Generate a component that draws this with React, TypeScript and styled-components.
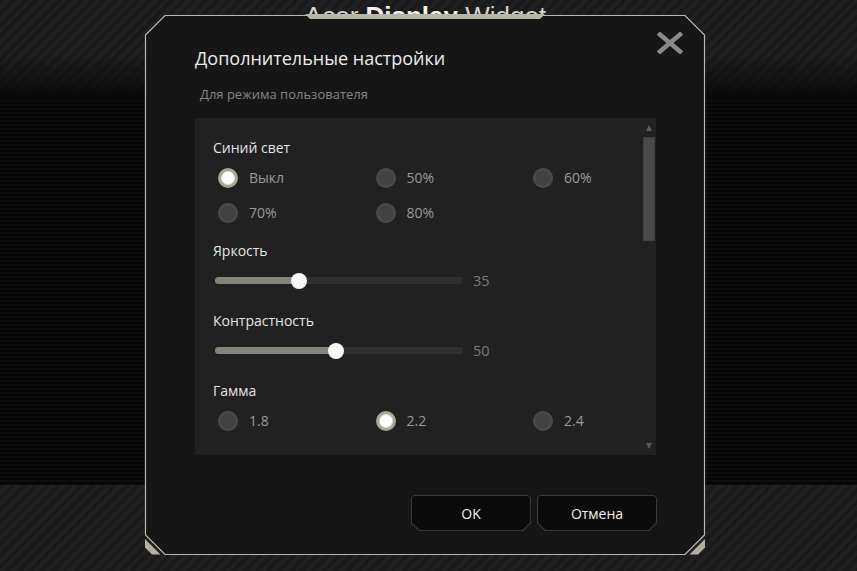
import React from "react";
import styled, { createGlobalStyle } from "styled-components";

const GlobalStyle = createGlobalStyle`
  html, body { margin: 0; padding: 0; background: #0a0a0a; }
  body {
    width: 857px; height: 571px; overflow: hidden;
    font-family: "Open Sans", "Liberation Sans", sans-serif;
  }
  * { box-sizing: border-box; }
`;

const stripes = `repeating-linear-gradient(135deg, #1a1a1a 0 4px, #202020 4px 8px)`;

const Page = styled.div`
  position: relative;
  width: 857px;
  height: 571px;
  overflow: hidden;
  display: flex;
  flex-direction: column;
`;

const TopBar = styled.header`
  height: 100px;
  padding-top: 3px;
  background: linear-gradient(to bottom, rgba(8, 8, 8, 0) 55%, #080808 100%), ${stripes};
`;

const AppTitle = styled.h1`
  margin: 0;
  padding-right: 6px;
  text-align: center;
  font-family: "Liberation Sans", Arial, sans-serif;
  font-weight: 400;
  font-size: 26px;
  line-height: 26px;
  color: #d4d4d4;
  b { font-weight: 700; color: #f2f2f2; }
`;

const Middle = styled.div`
  height: 385px;
  background: repeating-linear-gradient(to bottom, #0d0d0d 0 2px, #070707 2px 4px);
`;

const BottomBar = styled.div`
  flex: 1;
  background: ${stripes};
`;

/* ---------- dialog ---------- */

const Dialog = styled.section`
  position: absolute;
  left: 145px;
  top: 15px;
  width: 560px;
  height: 540px;
  padding: 0 49px 0 50px;
  display: flex;
  flex-direction: column;
`;

const Frame = styled.svg`
  position: absolute;
  left: 0;
  top: 0;
  overflow: visible;
  z-index: 0;
`;

const DialogHeader = styled.div`
  position: relative;
  z-index: 1;
  height: 70px;
  padding-top: 17px;
  display: flex;
  justify-content: space-between;
  align-items: flex-start;
`;

const DialogTitle = styled.h2`
  margin: 14px 0 0 0;
  font-size: 18px;
  line-height: 24px;
  font-weight: 400;
  color: #ececec;
`;

const CloseButton = styled.button`
  width: 26px;
  height: 22px;
  margin-right: -27px;
  padding: 0;
  border: 0;
  background: transparent;
  display: flex;
  align-items: center;
  justify-content: center;
`;

const Subtitle = styled.div`
  position: relative;
  z-index: 1;
  padding-left: 5px;
  font-size: 13px;
  line-height: 18px;
  color: #858585;
`;

const Panel = styled.div`
  position: relative;
  z-index: 1;
  margin-top: 15px;
  height: 337px;
  background: #212121;
  display: flex;
`;

const PanelBody = styled.div`
  flex: 1;
  padding: 20px 0 0 18px;
  overflow: hidden;
  display: flex;
  flex-direction: column;
  gap: 11px;
`;

const Section = styled.div`
  display: flex;
  flex-direction: column;
`;

const SectionLabel = styled.div`
  font-size: 14px;
  line-height: 20px;
  color: #e4e4e4;
`;

const RadioGrid = styled.div`
  margin-top: 2px;
  padding-left: 5px;
  display: grid;
  grid-template-columns: repeat(3, 157.5px);
  grid-auto-rows: 35px;
`;

const RadioOption = styled.label`
  display: flex;
  align-items: center;
  gap: 11px;
  font-size: 14px;
  color: #9a9a9a;
`;

const RadioDot = styled.span<{ $checked?: boolean }>`
  width: 20px;
  height: 20px;
  flex: none;
  border-radius: 50%;
  ${(p) =>
    p.$checked
      ? `background: #ffffff; border: 3.5px solid #a8a592; box-shadow: inset 0 0 0 1px #dcdad0;`
      : `background: radial-gradient(circle, #424242 0 45%, #4e4e4e 72%);`}
`;

const SliderRow = styled.div`
  height: 39px;
  padding-left: 2px;
  display: flex;
  align-items: center;
`;

const Track = styled.div`
  position: relative;
  width: 248px;
  height: 7px;
  border-radius: 4px;
  background: #2f2f2f;
`;

const TrackFill = styled.div`
  height: 100%;
  border-radius: 4px;
  background: #86847a;
`;

const Thumb = styled.div`
  position: absolute;
  top: 50%;
  width: 16px;
  height: 16px;
  margin: -8px 0 0 -8px;
  border-radius: 50%;
  background: #f7f7f7;
`;

const SliderValue = styled.span`
  margin-left: 10px;
  font-size: 14.5px;
  color: #7c7c7c;
`;

const ScrollTrack = styled.div`
  width: 12px;
  margin-right: 1px;
  display: flex;
  flex-direction: column;
`;

const ScrollArrow = styled.div<{ $dir: "up" | "down" }>`
  height: 19px;
  display: flex;
  align-items: center;
  justify-content: center;
  &::before {
    content: "";
    border-left: 3.5px solid transparent;
    border-right: 3.5px solid transparent;
    ${(p) => (p.$dir === "up" ? "border-bottom: 6px solid #5a5a5a;" : "border-top: 6px solid #5a5a5a;")}
  }
`;

const ScrollThumb = styled.div`
  height: 104px;
  background: #4a4a4a;
  box-shadow: inset 0 0 0 1px #404040;
`;

const ScrollSpacer = styled.div`
  flex: 1;
`;

const Footer = styled.div`
  position: relative;
  z-index: 1;
  margin-top: 40px;
  margin-right: -1px;
  display: flex;
  justify-content: flex-end;
  gap: 6px;
`;

const ButtonFrame = styled.div`
  width: 120px;
  height: 36px;
  padding: 1px;
  background: #3a3a3a;
  clip-path: polygon(3px 0, calc(100% - 3px) 0, 100% 3px, 100% calc(100% - 8px), calc(100% - 8px) 100%, 8px 100%, 0 calc(100% - 8px), 0 3px);
`;

const ButtonFace = styled.button`
  width: 100%;
  height: 100%;
  border: 0;
  padding: 0;
  background: #0b0b0b;
  color: #f0f0f0;
  font-family: inherit;
  font-size: 14px;
  clip-path: polygon(2px 0, calc(100% - 2px) 0, 100% 2px, 100% calc(100% - 7.5px), calc(100% - 7.5px) 100%, 7.5px 100%, 0 calc(100% - 7.5px), 0 2px);
`;

type Opt = { label: string; checked?: boolean };

const RadioSet = ({ options }: { options: Opt[] }) => (
  <RadioGrid>
    {options.map((o) => (
      <RadioOption key={o.label}>
        <RadioDot $checked={o.checked} />
        {o.label}
      </RadioOption>
    ))}
  </RadioGrid>
);

const Slider = ({ value }: { value: number }) => (
  <SliderRow>
    <Track>
      <TrackFill style={{ width: `calc(${value}% - 3px)` }} />
      <Thumb style={{ left: `calc(${value}% - 3px)` }} />
    </Track>
    <SliderValue>{value}</SliderValue>
  </SliderRow>
);

export default function App() {
  return (
    <>
      <GlobalStyle />
      <Page>
        <TopBar>
          <AppTitle>
            Acer <b>Display</b> Widget
          </AppTitle>
        </TopBar>
        <Middle />
        <BottomBar />

        <Dialog>
          <Frame width="560" height="540" viewBox="0 0 560 540">
            <path
              d="M20 0.5 H540 L559.5 20 V520 L540 539.5 H20 L0.5 520 V20 Z"
              fill="#161616"
              stroke="#bcb8ac"
              strokeWidth="1.2"
            />
            <polygon points="160,-1 400,-1 395,4 165,4" fill="#b9b5a8" />
            <polygon points="0,524 15.5,539.5 7,539.5 0,532.5" fill="#b3af9f" />
            <polygon points="560,524 544.5,539.5 553,539.5 560,532.5" fill="#b3af9f" />
          </Frame>

          <DialogHeader>
            <DialogTitle>Дополнительные настройки</DialogTitle>
            <CloseButton aria-label="Закрыть">
              <svg width="26" height="22" viewBox="0 0 26 22">
                <path d="M3 2.5 L23 19.5 M23 2.5 L3 19.5" stroke="#8a8a8a" strokeWidth="4.5" strokeLinecap="square" />
              </svg>
            </CloseButton>
          </DialogHeader>

          <Subtitle>Для режима пользователя</Subtitle>

          <Panel>
            <PanelBody>
              <Section>
                <SectionLabel>Синий свет</SectionLabel>
                <RadioSet
                  options={[
                    { label: "Выкл", checked: true },
                    { label: "50%" },
                    { label: "60%" },
                    { label: "70%" },
                    { label: "80%" },
                  ]}
                />
              </Section>
              <Section>
                <SectionLabel>Яркость</SectionLabel>
                <Slider value={35} />
              </Section>
              <Section>
                <SectionLabel>Контрастность</SectionLabel>
                <Slider value={50} />
              </Section>
              <Section>
                <SectionLabel>Гамма</SectionLabel>
                <RadioSet options={[{ label: "1.8" }, { label: "2.2", checked: true }, { label: "2.4" }]} />
              </Section>
            </PanelBody>
            <ScrollTrack>
              <ScrollArrow $dir="up" />
              <ScrollThumb />
              <ScrollSpacer />
              <ScrollArrow $dir="down" />
            </ScrollTrack>
          </Panel>

          <Footer>
            <ButtonFrame>
              <ButtonFace>OK</ButtonFace>
            </ButtonFrame>
            <ButtonFrame>
              <ButtonFace>Отмена</ButtonFace>
            </ButtonFrame>
          </Footer>
        </Dialog>
      </Page>
    </>
  );
}
